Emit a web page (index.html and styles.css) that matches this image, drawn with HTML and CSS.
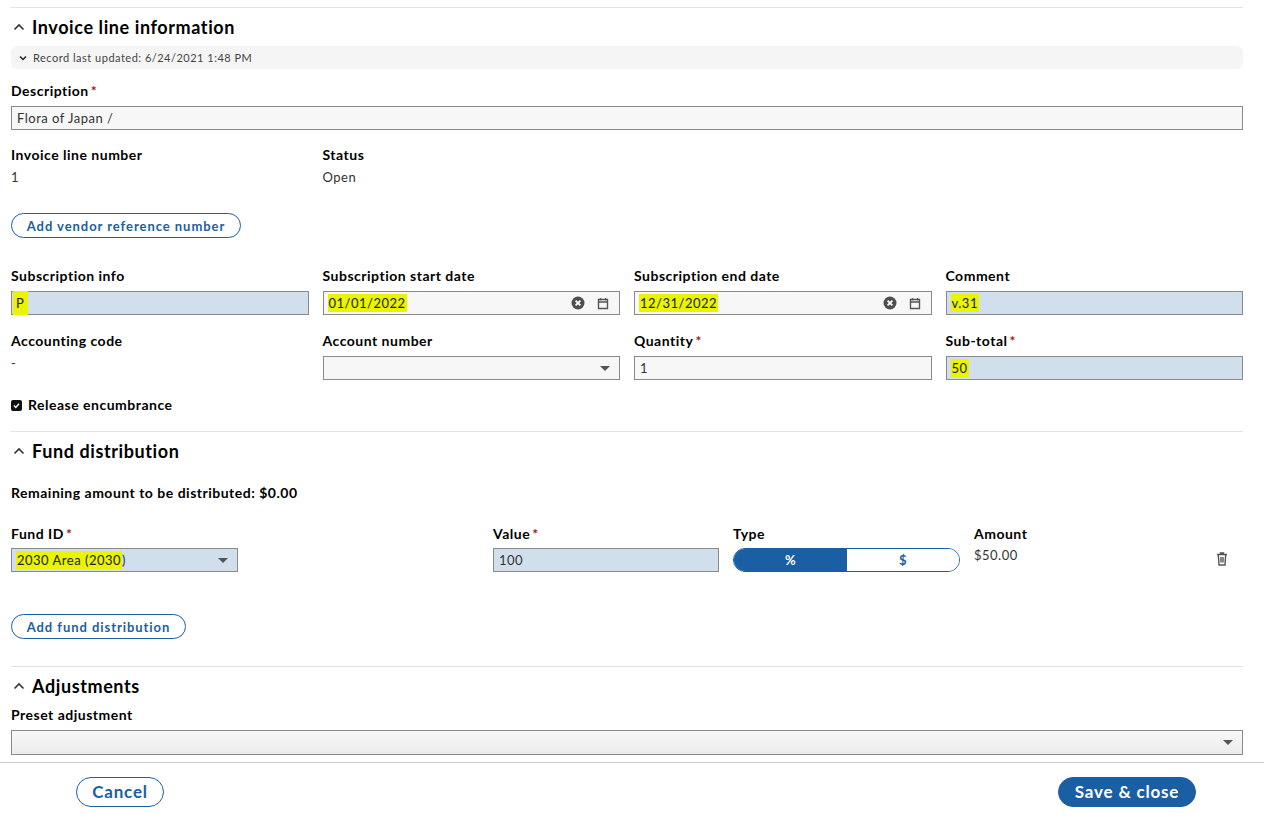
FILE: index.html
```html
<!DOCTYPE html>
<html>
<head>
<meta charset="utf-8">
<link rel="stylesheet" href="styles.css">
</head>
<body>
<div class="page">
  <div class="content">
    <section class="section first">
      <h2 class="heading"><svg class="chev" viewBox="0 0 12 8"><polyline points="1.5,6.5 6,2 10.5,6.5"/></svg>Invoice line information</h2>
      <div class="record"><svg class="chev-sm" viewBox="0 0 8 6"><polyline points="1,1.5 4,4.5 7,1.5"/></svg>Record last updated: 6/24/2021 1:48 PM</div>
      <div class="field desc">
        <div class="label">Description<span class="req">*</span></div>
        <div class="input">Flora of Japan /</div>
      </div>
      <div class="grid4 row-info">
        <div class="field">
          <div class="label">Invoice line number</div>
          <div class="value">1</div>
        </div>
        <div class="field">
          <div class="label">Status</div>
          <div class="value">Open</div>
        </div>
      </div>
      <button class="pill vendor">Add vendor reference number</button>
      <div class="grid4 row-sub">
        <div class="field">
          <div class="label">Subscription info</div>
          <div class="input hl"><span class="mark mark-p">P</span></div>
        </div>
        <div class="field">
          <div class="label">Subscription start date</div>
          <div class="input date"><span class="mark">01/01/2022</span>
            <span class="icons">
              <svg class="clear" viewBox="0 0 14 14"><circle cx="7" cy="7" r="6.5"/><path d="M4.6 4.6 L9.4 9.4 M9.4 4.6 L4.6 9.4"/></svg>
              <svg class="cal" viewBox="0 0 12 13"><path d="M1.5 2.5 H10.5 V11.5 H1.5 Z M1.5 5 H10.5 M3.5 1 V3.5 M8.5 1 V3.5"/></svg>
            </span>
          </div>
        </div>
        <div class="field">
          <div class="label">Subscription end date</div>
          <div class="input date"><span class="mark">12/31/2022</span>
            <span class="icons">
              <svg class="clear" viewBox="0 0 14 14"><circle cx="7" cy="7" r="6.5"/><path d="M4.6 4.6 L9.4 9.4 M9.4 4.6 L4.6 9.4"/></svg>
              <svg class="cal" viewBox="0 0 12 13"><path d="M1.5 2.5 H10.5 V11.5 H1.5 Z M1.5 5 H10.5 M3.5 1 V3.5 M8.5 1 V3.5"/></svg>
            </span>
          </div>
        </div>
        <div class="field">
          <div class="label">Comment</div>
          <div class="input hl"><span class="mark">v.31</span></div>
        </div>
      </div>
      <div class="grid4 row-acc">
        <div class="field">
          <div class="label">Accounting code</div>
          <div class="value">-</div>
        </div>
        <div class="field">
          <div class="label">Account number</div>
          <div class="input select"><span></span><span class="tri"></span></div>
        </div>
        <div class="field">
          <div class="label">Quantity<span class="req">*</span></div>
          <div class="input">1</div>
        </div>
        <div class="field">
          <div class="label">Sub-total<span class="req">*</span></div>
          <div class="input hl"><span class="mark">50</span></div>
        </div>
      </div>
      <div class="check-row">
        <span class="checkbox"><svg viewBox="0 0 11 11"><polyline points="3,5.6 4.8,7.4 8,3.8"/></svg></span>
        <span class="label">Release encumbrance</span>
      </div>
    </section>

    <section class="section">
      <h2 class="heading"><svg class="chev" viewBox="0 0 12 8"><polyline points="1.5,6.5 6,2 10.5,6.5"/></svg>Fund distribution</h2>
      <div class="label remaining">Remaining amount to be distributed: $0.00</div>
      <div class="fund-row">
        <div class="field">
          <div class="label">Fund ID<span class="req">*</span></div>
          <div class="input select hl fund"><span class="mark">2030 Area (2030</span>)<span class="tri"></span></div>
        </div>
        <div class="field">
          <div class="label">Value<span class="req">*</span></div>
          <div class="input hl">100</div>
        </div>
        <div class="field">
          <div class="label">Type</div>
          <div class="toggle"><span class="on">%</span><span class="off">$</span></div>
        </div>
        <div class="field">
          <div class="label">Amount</div>
          <div class="amount">$50.00</div>
        </div>
        <div class="trash-cell">
          <svg class="trash" viewBox="0 0 12 14"><path d="M1 2.5 H11 M4.5 2.5 V1 H7.5 V2.5 M2.3 2.5 L3 13 H9 L9.7 2.5 M5 5 V10.5 M7 5 V10.5"/></svg>
        </div>
      </div>
      <button class="pill addfund">Add fund distribution</button>
    </section>

    <section class="section last">
      <h2 class="heading"><svg class="chev" viewBox="0 0 12 8"><polyline points="1.5,6.5 6,2 10.5,6.5"/></svg>Adjustments</h2>
      <div class="field preset">
        <div class="label">Preset adjustment</div>
        <div class="input select grad"><span></span><span class="tri"></span></div>
      </div>
    </section>
  </div>
  <footer class="footer">
    <button class="btn cancel">Cancel</button>
    <button class="btn save">Save &amp; close</button>
  </footer>
</div>
</body>
</html>
```
FILE: styles.css
```css
* { box-sizing: border-box; }
html, body { margin: 0; padding: 0; background: #fff; }
body {
  font-family: Lato, "Open Sans", "Liberation Sans", sans-serif;
  color: #000;
  width: 1264px;
  height: 820px;
  overflow: hidden;
}
.page { display: flex; flex-direction: column; height: 820px; }
.content {
  height: 762px;
  overflow: hidden;
  padding: 7px 21px 0 11px;
}
.section { border-top: 1px solid #e3e3e3; }
.heading {
  margin: 0;
  font-size: 18px;
  line-height: 24px;
  font-weight: 700;
  display: flex;
  align-items: center;
  letter-spacing: 0.6px;
}
.first .heading { margin-top: 7px; }
.chev {
  width: 12px; height: 8px;
  margin: 0 7px 0 2px;
  fill: none; stroke: #333; stroke-width: 1.6;
}
.record {
  margin-top: 7px;
  height: 23px;
  background: #f5f5f5;
  border-radius: 6px;
  font-size: 11px;
  color: #444;
  display: flex;
  align-items: center;
  padding-left: 8px;
  letter-spacing: 0.5px;
}
.chev-sm {
  width: 8px; height: 6px;
  margin-right: 6px;
  fill: none; stroke: #222; stroke-width: 1.5;
}
.label {
  font-size: 14px;
  font-weight: 700;
  line-height: 18px;
  letter-spacing: 0.5px;
}
.req { color: #a01818; margin-left: 2px; }
.field .label { margin-bottom: 6px; }
.value {
  font-size: 13px;
  line-height: 18px;
  color: #333;
  margin-top: -2px;
  letter-spacing: 0.5px;
}
.input {
  height: 24px;
  border: 1px solid #8a8a8a;
  background: #f7f7f7;
  font-size: 13px;
  color: #333;
  display: flex;
  align-items: center;
  padding-left: 5px;
  position: relative;
  letter-spacing: 0.5px;
}
.input.hl { background: #d1dfec; }
.mark {
  background: #eaf300;
  color: #222;
  padding: 1px 1px;
  margin-left: -1px;
}
.mark-p { padding: 4px 4px 4px 3px; margin-left: -4px; }
.desc { margin-top: 13px; }
.grid4 {
  display: grid;
  grid-template-columns: repeat(4, 1fr);
  column-gap: 14px;
}
.row-info { margin-top: 16px; }
.pill {
  font-family: inherit;
  background: #fff;
  border: 1px solid #1a5ea3;
  color: #1a5ea3;
  border-radius: 13px;
  font-size: 13px;
  font-weight: 700;
  letter-spacing: 0.95px;
  height: 25px;
  padding: 0;
  display: block;
  cursor: pointer;
}
.vendor { margin-top: 27px; width: 230px; }
.row-sub { margin-top: 29px; }
.row-acc { margin-top: 17px; }
.date { justify-content: space-between; padding-right: 10px; }
.icons { display: flex; align-items: center; gap: 12px; }
.clear { width: 14px; height: 14px; }
.clear circle { fill: #4f4f4f; }
.clear path { stroke: #fff; stroke-width: 1.8; fill: none; }
.cal { width: 12px; height: 13px; fill: none; stroke: #555; stroke-width: 1.4; }
.select { justify-content: space-between; padding-right: 9px; }
.tri {
  width: 0; height: 0;
  border-left: 5px solid transparent;
  border-right: 5px solid transparent;
  border-top: 5px solid #555;
}
.fund { justify-content: flex-start; }
.fund .tri { margin-left: auto; }
.check-row {
  margin-top: 16px;
  display: flex;
  align-items: center;
  gap: 6px;
  padding-bottom: 17px;
}
.checkbox {
  width: 11px; height: 11px;
  background: #111;
  border-radius: 2px;
  display: inline-flex;
}
.checkbox svg { width: 11px; height: 11px; fill: none; stroke: #fff; stroke-width: 1.4; }
.section + .section .heading { margin-top: 7px; }
.remaining { margin-top: 21px; }
.fund-row {
  margin-top: 23px;
  display: grid;
  grid-template-columns: 468px 226px 227px 1fr 40px;
  column-gap: 14px;
}
.fund-row .field .label { margin-bottom: 5px; }
.fund-row .fund { width: 227px; }
.toggle {
  height: 24px;
  border: 1px solid #1a5ea3;
  border-radius: 12px;
  display: flex;
  overflow: hidden;
  font-size: 13px;
  font-weight: 700;
}
.toggle span { flex: 1; display: flex; align-items: center; justify-content: center; }
.toggle .on { background: #1a5ea3; color: #fff; }
.toggle .off { background: #fff; color: #1a5ea3; }
.amount { font-size: 13px; color: #333; line-height: 18px; margin-top: -2px; letter-spacing: 0.5px; }
.trash-cell { display: flex; align-items: flex-end; justify-content: flex-start; padding-bottom: 6px; }
.trash { width: 12px; height: 14px; fill: none; stroke: #555; stroke-width: 1.4; margin-left: 13px; }
.addfund { margin-top: 42px; width: 175px; margin-bottom: 27px; }
.last .heading { margin-top: 7px; }
.preset { margin-top: 8px; }
.preset .label { margin-bottom: 6px; }
.grad { background: linear-gradient(#f7f7f7, #ececec); height: 25px; }
.footer {
  border-top: 1px solid #cfcfcf;
  height: 58px;
  display: flex;
  align-items: center;
  justify-content: space-between;
  padding: 0 68px 0 76px;
  background: #fff;
}
.btn {
  font-family: inherit;
  font-size: 17px;
  font-weight: 700;
  height: 30px;
  border-radius: 15px;
  border: 1px solid #1a5ea3;
  letter-spacing: 0.8px;
  cursor: pointer;
  padding: 0;
}
.cancel { width: 88px; background: #fff; color: #1a5ea3; }
.save { width: 138px; background: #1a5ea3; color: #fff; }
```
